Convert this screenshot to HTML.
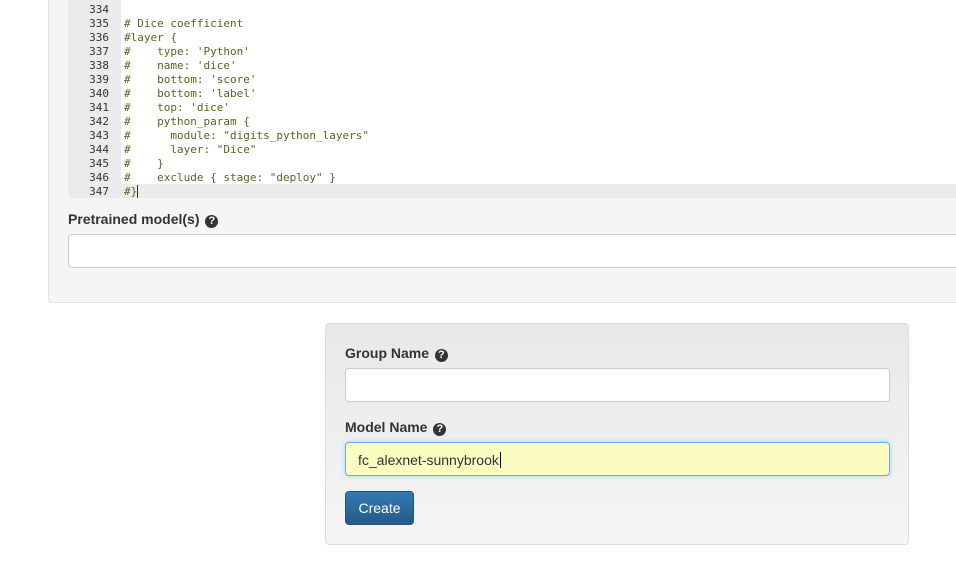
<!DOCTYPE html>
<html><head><style>
body{margin:0;width:956px;height:567px;background:#fff;position:relative;overflow:hidden;font-family:"Liberation Sans",sans-serif;}
.panel1{position:absolute;left:48px;top:-10px;width:920px;height:311px;background:#f5f5f5;border:1px solid #e3e3e3;border-radius:4px;}
.code{position:absolute;left:68px;top:0;width:900px;height:198px;background:#fff;}
.gut{position:absolute;left:0;top:0;width:53px;height:198px;background:#ebebeb;border-bottom-left-radius:4px;}
.hl{position:absolute;left:53px;top:184px;width:900px;height:14px;background:#ebebeb;}
.lbl{position:absolute;font-weight:bold;font-size:14px;color:#333;}
.q{display:inline-block;width:13px;height:13px;border-radius:50%;background:#333;color:#fff;font-size:11px;line-height:13px;text-align:center;vertical-align:0px;margin-left:2px;}
.inp{position:absolute;background:#fff;border:1px solid #ccc;border-radius:4px;box-sizing:border-box;}
.panel2{position:absolute;left:325px;top:323px;width:584px;height:222px;box-sizing:border-box;border:1px solid #dcdcdc;border-radius:4px;background:linear-gradient(#e8e8e8,#f5f5f5);}
</style></head><body>
<div class="panel1"></div>
<div class="code">
<div class="gut"></div>
<div class="hl"></div>
</div>
<div style="position:absolute;left:68px;top:3px;font-family:'DejaVu Sans Mono','Liberation Mono',monospace;font-size:11px;line-height:14px;">
<div style="position:absolute;left:0;top:0;width:41px;text-align:right;color:#333;white-space:pre">334
335
336
337
338
339
340
341
342
343
344
345
346
347</div>
<div style="position:absolute;left:56px;top:0;color:#4f6a1e;white-space:pre">
# Dice coefficient
#layer {
#    type: 'Python'
#    name: 'dice'
#    bottom: 'score'
#    bottom: 'label'
#    top: 'dice'
#    python_param {
#      module: "digits_python_layers"
#      layer: "Dice"
#    }
#    exclude { stage: "deploy" }
#}<span style="border-left:1px solid #333;"></span></div>
</div>
<div class="lbl" style="left:68px;top:211px;">Pretrained model(s) <span class="q">?</span></div>
<div class="inp" style="left:68px;top:234px;width:900px;height:34px;"></div>
<div class="panel2"></div>
<div class="lbl" style="left:345px;top:345px;">Group Name <span class="q">?</span></div>
<div class="inp" style="left:345px;top:368px;width:545px;height:34px;"></div>
<div class="lbl" style="left:345px;top:419px;">Model Name <span class="q">?</span></div>
<div class="inp" style="left:345px;top:442px;width:545px;height:34px;background:#fafcc0;border-color:#66afe9;box-shadow:0 0 4px rgba(102,175,233,.5);font-size:14px;color:#333;padding:9px 12px;line-height:16px;">fc_alexnet-sunnybrook<span style="border-left:1px solid #000;margin-left:1px"></span></div>
<div style="position:absolute;left:345px;top:491px;width:69px;height:34px;box-sizing:border-box;border:1px solid #245580;border-radius:4px;background:linear-gradient(#337ab7,#265a88);color:#fff;font-size:14px;text-align:center;line-height:32px;">Create</div>
</body></html>
